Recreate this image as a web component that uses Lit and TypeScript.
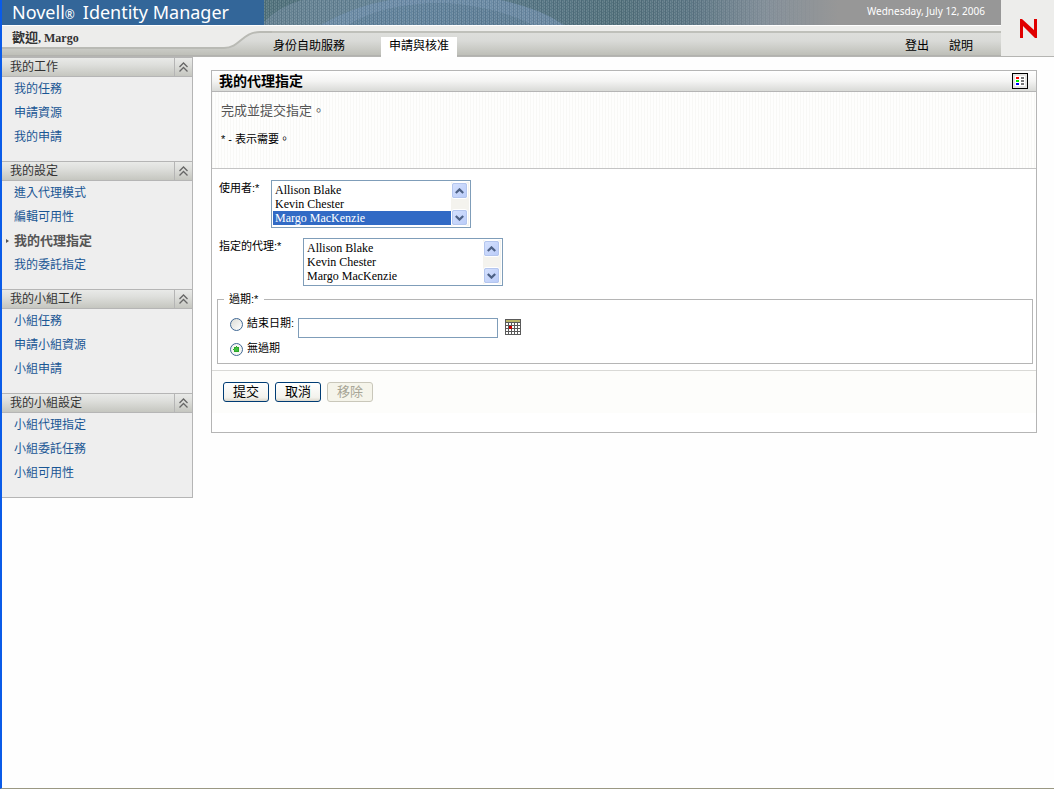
import { LitElement, html, css, svg, nothing } from "lit";
import { customElement, property } from "lit/decorators.js";

interface NavGroup {
  title: string;
  items: string[];
}

const GROUPS: NavGroup[] = [
  { title: "我的工作", items: ["我的任務", "申請資源", "我的申請"] },
  { title: "我的設定", items: ["進入代理模式", "編輯可用性", "我的代理指定", "我的委託指定"] },
  { title: "我的小組工作", items: ["小組任務", "申請小組資源", "小組申請"] },
  { title: "我的小組設定", items: ["小組代理指定", "小組委託任務", "小組可用性"] },
];

const ACTIVE_ITEM = "我的代理指定";
const USERS = ["Allison Blake", "Kevin Chester", "Margo MacKenzie"];

@customElement("idm-header")
export class IdmHeader extends LitElement {
  static styles = css`
    :host {
      display: grid;
      grid-template-columns: minmax(0, 1fr) 53px;
      border-bottom: 1px solid #b5b5b2;
    }
    .banner {
      display: grid;
      grid-template-columns: 262px minmax(0, 1fr);
      grid-template-rows: 25px;
      border-bottom: 1px solid #fff;
    }
    .product {
      display: flex;
      align-items: baseline;
      padding-left: 10px;
      background: #336699;
      color: #fff;
      font: 18px/25px "Noto Sans", sans-serif;
      white-space: nowrap;
    }
    .reg {
      padding-right: 8px;
      font-size: 12px;
    }
    .scene {
      display: grid;
      background: linear-gradient(90deg, #5b7986 0, #5e7f92 20%, #54727d 48%, #5e7886 58%, #84909a 68%, #979797 78%);
      overflow: hidden;
    }
    .art,
    .date {
      grid-area: 1 / 1;
    }
    .art {
      width: 100%;
      height: 25px;
    }
    .date {
      justify-self: end;
      padding-right: 16px;
      color: #fff;
      font: 10px/22px "Noto Sans", sans-serif;
    }
    .strip {
      display: grid;
      height: 30px;
      background: linear-gradient(#ededeb 0 5px, #bfc0ba 5px 7px, #dddedb 7px, #d9dad7 15px, #bebfb8 29px, #b2b2ae 29px);
    }
    .swoosh,
    .bar {
      grid-area: 1 / 1;
    }
    .swoosh {
      width: 270px;
      height: 30px;
    }
    .bar {
      display: flex;
      align-items: flex-start;
    }
    .welcome {
      box-sizing: border-box;
      width: 248px;
      padding-left: 10px;
      color: #333;
      font: bold 12px/23px "Liberation Serif", "Noto Sans CJK TC", serif;
    }
    .greeting {
      font-size: 13px;
    }
    .tabs {
      display: flex;
      flex: 1;
      gap: 24px;
      padding-top: 11px;
    }
    .tab,
    .util {
      color: #000;
      text-decoration: none;
      font: 12px/19px "Liberation Sans", "Noto Sans CJK TC", sans-serif;
    }
    .tab {
      padding: 0 12px 0 23px;
    }
    .tab.on {
      background: #fff;
      padding: 0 8px;
      height: 20px;
    }
    .utils {
      display: flex;
      gap: 20px;
      padding: 11px 28px 0 0;
    }
    .brand {
      display: flex;
      align-items: center;
      justify-content: center;
      padding-left: 2px;
      background: #ededeb;
    }
    .n {
      width: 17px;
      height: 19px;
    }
  `;

  render() {
    return html`
      <div>
        <div class="banner">
          <div class="product">Novell<span class="reg">®</span>Identity Manager</div>
          <div class="scene">
            <svg class="art" viewBox="0 0 737 25" preserveAspectRatio="xMinYMin slice" aria-hidden="true">
              <defs>
                <pattern id="weave" width="4" height="3" patternUnits="userSpaceOnUse">
                  <path d="M0.5 0V2M2.5 1V3" stroke="#fff" stroke-opacity=".12" />
                  <path d="M1.5 0V3" stroke="#123" stroke-opacity=".12" />
                </pattern>
                <linearGradient id="fade">
                  <stop offset=".55" stop-color="#fff" />
                  <stop offset=".76" stop-color="#000" />
                </linearGradient>
                <mask id="soft"><rect width="737" height="25" fill="url(#fade)" /></mask>
              </defs>
              <path d="M0 22Q14 7 38 0H0Z" fill="#4f6f78" opacity=".6" />
              <path d="M0 22Q14 7 38 0H126Q85 8 56 25H0Z" fill="#7893a6" opacity=".35" />
              <path d="M56 25Q90 6 126 0H236Q275 8 300 25H268Q235 7 180 3Q120 3 84 25Z" fill="#7e9cc0" opacity=".5" />
              <path d="M84 25Q120 3 180 3Q235 7 268 25Z" fill="#6c8cae" opacity=".4" />
              <rect width="737" height="25" fill="url(#weave)" mask="url(#soft)" />
            </svg>
            <span class="date">Wednesday, July 12, 2006</span>
          </div>
        </div>
        <div class="strip">
          <svg class="swoosh" viewBox="0 0 270 30" aria-hidden="true">
            <path d="M0 0H270V6H258C240 6 238 22 222 22H0Z" fill="#ededeb" />
            <path d="M270 6H258C240 6 238 22 222 22H0" fill="none" stroke="#b9bab4" stroke-width="2" />
          </svg>
          <div class="bar">
            <div class="welcome"><span class="greeting">歡迎</span>, Margo</div>
            <nav class="tabs">
              <a class="tab" href="#self">身份自助服務</a>
              <a class="tab on" href="#requests" aria-current="page">申請與核准</a>
            </nav>
            <div class="utils">
              <a class="util" href="#logout">登出</a>
              <a class="util" href="#help">說明</a>
            </div>
          </div>
        </div>
      </div>
      <div class="brand">
        <svg class="n" viewBox="0 0 17 19" role="img" aria-label="Novell">
          <path d="M0 0H2L14 11V0H17V19H15L3 7V19H0Z" fill="#e00000" />
        </svg>
      </div>
    `;
  }
}

@customElement("idm-sidebar")
export class IdmSidebar extends LitElement {
  static styles = css`
    :host {
      display: block;
      background: #eee;
      border: solid #b5b5b5;
      border-width: 0 1px 1px 0;
      font: 12px/24px "Liberation Sans", "Noto Sans CJK TC", sans-serif;
    }
    .head {
      display: flex;
      border: solid #b5b5b5;
      border-width: 1px 0;
      background: linear-gradient(#e9eae8, #dddedb 40%, #c5c6c0);
    }
    .title {
      flex: 1;
      margin: 0;
      padding-left: 8px;
      color: #333;
      font: inherit;
      line-height: 18px;
    }
    .toggle {
      display: flex;
      align-items: center;
      justify-content: center;
      width: 18px;
      padding: 0;
      border: 0;
      border-left: 1px solid #b5b5b5;
      background: none;
    }
    .chevrons {
      width: 9px;
      height: 10px;
    }
    .list {
      list-style: none;
      margin: 0;
      padding: 0 0 12px;
    }
    .item {
      display: flex;
      align-items: center;
      height: 24px;
    }
    .item::before {
      content: "";
      width: 4px;
      margin-right: 8px;
    }
    .item.on::before {
      width: 0;
      margin: 0 5px 0 4px;
      border: 2px solid transparent;
      border-left: 3px solid #555;
      border-right-width: 0;
    }
    .link {
      color: #1a5694;
      text-decoration: none;
    }
    .on .link {
      color: #555;
      font-size: 13px;
      font-weight: bold;
    }
  `;

  render() {
    return html`
      <nav>
        ${GROUPS.map(
          (group) => html`
            <section>
              <div class="head">
                <h2 class="title">${group.title}</h2>
                <button class="toggle" type="button" aria-label=${group.title}>
                  <svg class="chevrons" viewBox="0 0 9 10" aria-hidden="true">
                    <path d="M0.5 5L4.5 1L8.5 5M0.5 9.5L4.5 5.5L8.5 9.5" fill="none" stroke="#666" stroke-width="1.3" />
                  </svg>
                </button>
              </div>
              <ul class="list">
                ${group.items.map((item) => {
                  const active = item === ACTIVE_ITEM;
                  return html`<li class=${active ? "item on" : "item"}>
                    <a class="link" href="#${item}" aria-current=${active ? "page" : nothing}>${item}</a>
                  </li>`;
                })}
              </ul>
            </section>
          `
        )}
      </nav>
    `;
  }
}

@customElement("idm-listbox")
export class IdmListbox extends LitElement {
  @property() label = "";
  @property() selected = "";
  @property({ type: Boolean }) wide = false;

  static styles = css`
    :host {
      display: flex;
      align-items: flex-start;
    }
    .label {
      width: 52px;
      font: 11px/16px "Liberation Sans", "Noto Sans CJK TC", sans-serif;
      white-space: nowrap;
    }
    .label.wide {
      width: 84px;
    }
    .frame {
      display: flex;
      box-sizing: border-box;
      width: 200px;
      height: 48px;
      padding: 1px;
      border: 1px solid #7f9db9;
      background: #fff;
    }
    .select {
      flex: 1;
      min-width: 0;
      height: 44px;
      padding: 1px 0;
      border: 0;
      border-radius: 0;
      outline: 0;
      overflow: hidden;
      background: #fff;
      color: #000;
      font: 12px/14px "Liberation Serif", serif;
    }
    .option {
      display: flex;
      align-items: center;
      box-sizing: border-box;
      height: 14px;
      min-height: 0;
      padding: 0 2px;
    }
    .option:checked {
      background: linear-gradient(#316ac5, #316ac5);
      -webkit-text-fill-color: #fff;
    }
    .scroll {
      display: flex;
      flex-direction: column;
      justify-content: space-between;
      width: 18px;
      background: #f4f3ee;
    }
    .step {
      display: flex;
      align-items: center;
      justify-content: center;
      box-sizing: border-box;
      width: 17px;
      height: 17px;
      padding: 0;
      border: 1px solid #fff;
      border-radius: 3px;
      outline: 1px solid #b4c6ee;
      outline-offset: -2px;
      background: linear-gradient(135deg, #d6e2fe, #b9cbf8);
    }
    .arrow {
      width: 9px;
      height: 6px;
    }
  `;

  private scrollList(delta: number) {
    this.renderRoot.querySelector("select")?.scrollBy(0, delta);
  }

  private arrow(d: string) {
    return html`<svg class="arrow" viewBox="0 0 9 6" aria-hidden="true">
      ${svg`<path d=${d} fill="none" stroke="#4d6185" stroke-width="2.2" />`}
    </svg>`;
  }

  render() {
    return html`
      <label class=${this.wide ? "label wide" : "label"} for="list">${this.label}</label>
      <div class="frame">
        <select class="select" id="list" size="3">
          ${USERS.map(
            (name) => html`<option class="option" ?selected=${name === this.selected}>${name}</option>`
          )}
        </select>
        <div class="scroll">
          <button class="step" type="button" aria-label="▲" @click=${() => this.scrollList(-14)}>
            ${this.arrow("M0.8 5L4.5 1.4L8.2 5")}
          </button>
          <button class="step" type="button" aria-label="▼" @click=${() => this.scrollList(14)}>
            ${this.arrow("M0.8 1L4.5 4.6L8.2 1")}
          </button>
        </div>
      </div>
    `;
  }
}

@customElement("idm-proxy-form")
export class IdmProxyForm extends LitElement {
  static styles = css`
    :host {
      display: block;
      border: 1px solid #b5b5b5;
      background: #fff;
      color: #000;
      font: 11px/16px "Liberation Sans", "Noto Sans CJK TC", sans-serif;
    }
    .titlebar {
      display: flex;
      align-items: center;
      justify-content: space-between;
      height: 20px;
      padding: 0 8px 0 7px;
      border-bottom: 1px solid #b5b5b5;
      background: linear-gradient(#fff, #f4f4f3 50%, #d9dad7);
    }
    .title {
      margin: 0;
      font-size: 14px;
      line-height: 20px;
    }
    .icon-button {
      display: block;
      padding: 0;
      border: 0;
      background: none;
    }
    .choice .icon-button {
      margin-top: 4px;
    }
    .icon {
      display: block;
      width: 16px;
      height: 16px;
    }
    .intro {
      padding: 9px 9px 21px;
      border-bottom: 1px solid #c4c4c4;
      background: repeating-linear-gradient(90deg, #f8f8f6 0 1px, #fefefd 1px 3px);
    }
    .lead {
      margin: 0 0 10px;
      color: #555;
      font-size: 13px;
      line-height: 20px;
    }
    .note {
      margin: 0;
    }
    .fields {
      display: flex;
      flex-direction: column;
      gap: 10px;
      padding: 11px 7px 6px;
    }
    .expiry {
      display: flex;
      flex-direction: column;
      gap: 2px;
      min-width: 0;
      margin: -5px -4px 0 -2px;
      padding: 8px 12px 7px;
      border: 1px solid #b5b5b5;
    }
    .legend {
      margin-left: -6px;
      padding: 0 6px 0 5px;
    }
    .choice {
      display: flex;
      align-items: flex-start;
    }
    .radio {
      appearance: none;
      box-sizing: border-box;
      width: 13px;
      height: 13px;
      margin: 3px 4px 0 0;
      border: 1px solid #3f6793;
      border-radius: 50%;
      background: linear-gradient(135deg, #dcdcd6, #fff);
    }
    .radio:checked {
      background: radial-gradient(circle, #3fbf3c 0 2px, #2ba62a 2px 3px, #f6f6f3 3px);
    }
    .choice-label {
      margin-right: 4px;
    }
    .date {
      box-sizing: border-box;
      width: 200px;
      height: 20px;
      margin: 3px 7px 0 0;
      padding: 0 2px;
      border: 1px solid #7f9db9;
      border-radius: 0;
      background: #fff;
      font: inherit;
    }
    .actions {
      display: flex;
      gap: 6px;
      height: 31px;
      padding: 11px 11px 0;
      margin-bottom: 19px;
      border-top: 1px solid #d9d9d6;
      background: #fdfdfb;
    }
    .button {
      box-sizing: border-box;
      width: 46px;
      height: 20px;
      padding: 0;
      border: 1px solid #003c74;
      border-radius: 3px;
      background: linear-gradient(#fff, #f3f2ec 80%, #dcd8cc);
      color: #000;
      font: 13px/18px "Liberation Sans", "Noto Sans CJK TC", sans-serif;
    }
    .button:disabled {
      border-color: #c9c7ba;
      background: #f5f4ea;
      color: #a7a596;
    }
  `;

  private legendIcon() {
    const rows = [
      { y: 4, color: "#f00" },
      { y: 7, color: "#0e0" },
      { y: 10, color: "#00f" },
    ];
    return html`<svg class="icon" viewBox="0 0 16 16" aria-hidden="true">
      <rect x=".5" y=".5" width="15" height="15" fill="#e6e6e4" stroke="#000" />
      <rect x="3" y="3" width="10" height="10" fill="#fff" />
      ${rows.map(
        (row) => svg`<rect x="4" y=${row.y} width="3" height="2" fill=${row.color} />
          <rect x="9" y=${row.y} width="3" height="2" fill="#777" />`
      )}
    </svg>`;
  }

  private calendarIcon() {
    return html`<svg class="icon" viewBox="0 0 16 16" aria-hidden="true">
      <rect width="16" height="16" fill="#5a5a5a" />
      <rect x="1" y="1" width="14" height="2" fill="#b9b56a" />
      ${[4, 7, 10, 13].map((y) =>
        [1, 4, 7, 10, 13].map((x) => svg`<rect x=${x} y=${y} width="2" height="2" fill="#fff" />`)
      )}
      <rect x="4" y="7" width="3" height="3" fill="#c80000" />
    </svg>`;
  }

  render() {
    return html`
      <header class="titlebar">
        <h1 class="title">我的代理指定</h1>
        <button class="icon-button" type="button" aria-label="說明">${this.legendIcon()}</button>
      </header>
      <div class="intro">
        <p class="lead">完成並提交指定。</p>
        <p class="note">* - 表示需要。</p>
      </div>
      <div class="fields">
        <idm-listbox label="使用者:*" selected="Margo MacKenzie"></idm-listbox>
        <idm-listbox label="指定的代理:*" wide></idm-listbox>
        <fieldset class="expiry">
          <legend class="legend">過期:*</legend>
          <div class="choice">
            <input class="radio" type="radio" name="expiry" id="ends" />
            <label class="choice-label" for="ends">結束日期:</label>
            <input class="date" type="text" aria-label="結束日期" />
            <button class="icon-button" type="button" aria-label="結束日期">${this.calendarIcon()}</button>
          </div>
          <div class="choice">
            <input class="radio" type="radio" name="expiry" id="never" checked />
            <label class="choice-label" for="never">無過期</label>
          </div>
        </fieldset>
      </div>
      <div class="actions">
        <button class="button" type="submit">提交</button>
        <button class="button" type="button">取消</button>
        <button class="button" type="button" disabled>移除</button>
      </div>
    `;
  }
}

@customElement("app-root")
export class AppRoot extends LitElement {
  static styles = css`
    :host {
      display: block;
      box-sizing: border-box;
      min-height: 100vh;
      border-left: 2px solid #0a5be8;
      border-bottom: 1px solid #9a9883;
      background: #fefefe;
    }
    .body {
      display: grid;
      grid-template-columns: 191px minmax(0, 1fr);
      align-items: start;
      gap: 18px;
      padding-right: 17px;
    }
    .main {
      padding-top: 13px;
    }
  `;

  render() {
    return html`
      <idm-header></idm-header>
      <div class="body">
        <idm-sidebar></idm-sidebar>
        <main class="main"><idm-proxy-form></idm-proxy-form></main>
      </div>
    `;
  }
}
